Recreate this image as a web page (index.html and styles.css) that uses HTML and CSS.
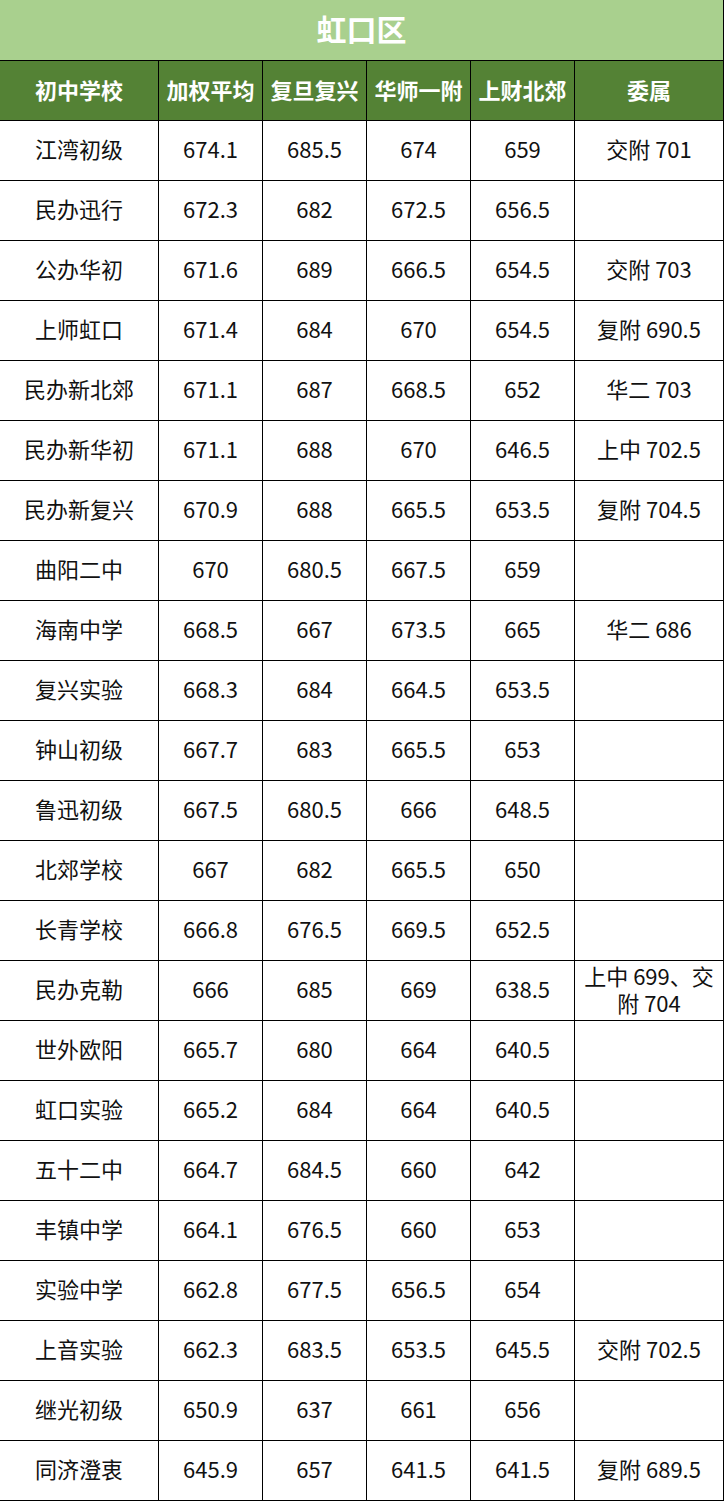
FILE: index.html
```html
<!DOCTYPE html>
<html lang="zh">
<head>
<meta charset="utf-8">
<link rel="stylesheet" href="styles.css">
</head>
<body>
<div class="grid">
  <div class="title">虹口区</div>
  <div class="h">初中学校</div><div class="h">加权平均</div><div class="h">复旦复兴</div><div class="h">华师一附</div><div class="h">上财北郊</div><div class="h">委属</div>
  <div class="c">江湾初级</div><div class="c">674.1</div><div class="c">685.5</div><div class="c">674</div><div class="c">659</div><div class="c">交附 701</div>
  <div class="c">民办迅行</div><div class="c">672.3</div><div class="c">682</div><div class="c">672.5</div><div class="c">656.5</div><div class="c"></div>
  <div class="c">公办华初</div><div class="c">671.6</div><div class="c">689</div><div class="c">666.5</div><div class="c">654.5</div><div class="c">交附 703</div>
  <div class="c">上师虹口</div><div class="c">671.4</div><div class="c">684</div><div class="c">670</div><div class="c">654.5</div><div class="c">复附 690.5</div>
  <div class="c">民办新北郊</div><div class="c">671.1</div><div class="c">687</div><div class="c">668.5</div><div class="c">652</div><div class="c">华二 703</div>
  <div class="c">民办新华初</div><div class="c">671.1</div><div class="c">688</div><div class="c">670</div><div class="c">646.5</div><div class="c">上中 702.5</div>
  <div class="c">民办新复兴</div><div class="c">670.9</div><div class="c">688</div><div class="c">665.5</div><div class="c">653.5</div><div class="c">复附 704.5</div>
  <div class="c">曲阳二中</div><div class="c">670</div><div class="c">680.5</div><div class="c">667.5</div><div class="c">659</div><div class="c"></div>
  <div class="c">海南中学</div><div class="c">668.5</div><div class="c">667</div><div class="c">673.5</div><div class="c">665</div><div class="c">华二 686</div>
  <div class="c">复兴实验</div><div class="c">668.3</div><div class="c">684</div><div class="c">664.5</div><div class="c">653.5</div><div class="c"></div>
  <div class="c">钟山初级</div><div class="c">667.7</div><div class="c">683</div><div class="c">665.5</div><div class="c">653</div><div class="c"></div>
  <div class="c">鲁迅初级</div><div class="c">667.5</div><div class="c">680.5</div><div class="c">666</div><div class="c">648.5</div><div class="c"></div>
  <div class="c">北郊学校</div><div class="c">667</div><div class="c">682</div><div class="c">665.5</div><div class="c">650</div><div class="c"></div>
  <div class="c">长青学校</div><div class="c">666.8</div><div class="c">676.5</div><div class="c">669.5</div><div class="c">652.5</div><div class="c"></div>
  <div class="c">民办克勒</div><div class="c">666</div><div class="c">685</div><div class="c">669</div><div class="c">638.5</div><div class="c wrap">上中 699、交附 704</div>
  <div class="c">世外欧阳</div><div class="c">665.7</div><div class="c">680</div><div class="c">664</div><div class="c">640.5</div><div class="c"></div>
  <div class="c">虹口实验</div><div class="c">665.2</div><div class="c">684</div><div class="c">664</div><div class="c">640.5</div><div class="c"></div>
  <div class="c">五十二中</div><div class="c">664.7</div><div class="c">684.5</div><div class="c">660</div><div class="c">642</div><div class="c"></div>
  <div class="c">丰镇中学</div><div class="c">664.1</div><div class="c">676.5</div><div class="c">660</div><div class="c">653</div><div class="c"></div>
  <div class="c">实验中学</div><div class="c">662.8</div><div class="c">677.5</div><div class="c">656.5</div><div class="c">654</div><div class="c"></div>
  <div class="c">上音实验</div><div class="c">662.3</div><div class="c">683.5</div><div class="c">653.5</div><div class="c">645.5</div><div class="c">交附 702.5</div>
  <div class="c">继光初级</div><div class="c">650.9</div><div class="c">637</div><div class="c">661</div><div class="c">656</div><div class="c"></div>
  <div class="c">同济澄衷</div><div class="c">645.9</div><div class="c">657</div><div class="c">641.5</div><div class="c">641.5</div><div class="c">复附 689.5</div>
</div>
</body>
</html>
```

FILE: styles.css
```css
html, body {
  margin: 0;
  padding: 0;
  background: #ffffff;
}
.grid {
  width: 723px;
  padding: 0 1px 1px 0;
  background: #000000;
  display: grid;
  grid-template-columns: 158px 103px 103px 103px 103px 148px;
  grid-template-rows: 60px 59px repeat(23, 59px);
  gap: 1px;
  font-family: "Noto Sans CJK SC", "Noto Sans", sans-serif;
  color: #111111;
}
.title {
  grid-column: 1 / -1;
  background: #a9d08e;
  color: #ffffff;
  font-weight: 700;
  font-size: 30px;
  display: flex;
  align-items: center;
  justify-content: center;
  padding-bottom: 5px;
}
.h {
  background: #548235;
  color: #ffffff;
  font-weight: 700;
  font-size: 22px;
  display: flex;
  align-items: center;
  justify-content: center;
  white-space: nowrap;
  padding-bottom: 4px;
}
.c {
  background: #ffffff;
  font-size: 22px;
  display: flex;
  align-items: center;
  justify-content: center;
  text-align: center;
  white-space: nowrap;
  padding-bottom: 5px;
}
.c.wrap {
  white-space: normal;
  line-height: 27px;
  padding: 0 4px 3px;
}
```
